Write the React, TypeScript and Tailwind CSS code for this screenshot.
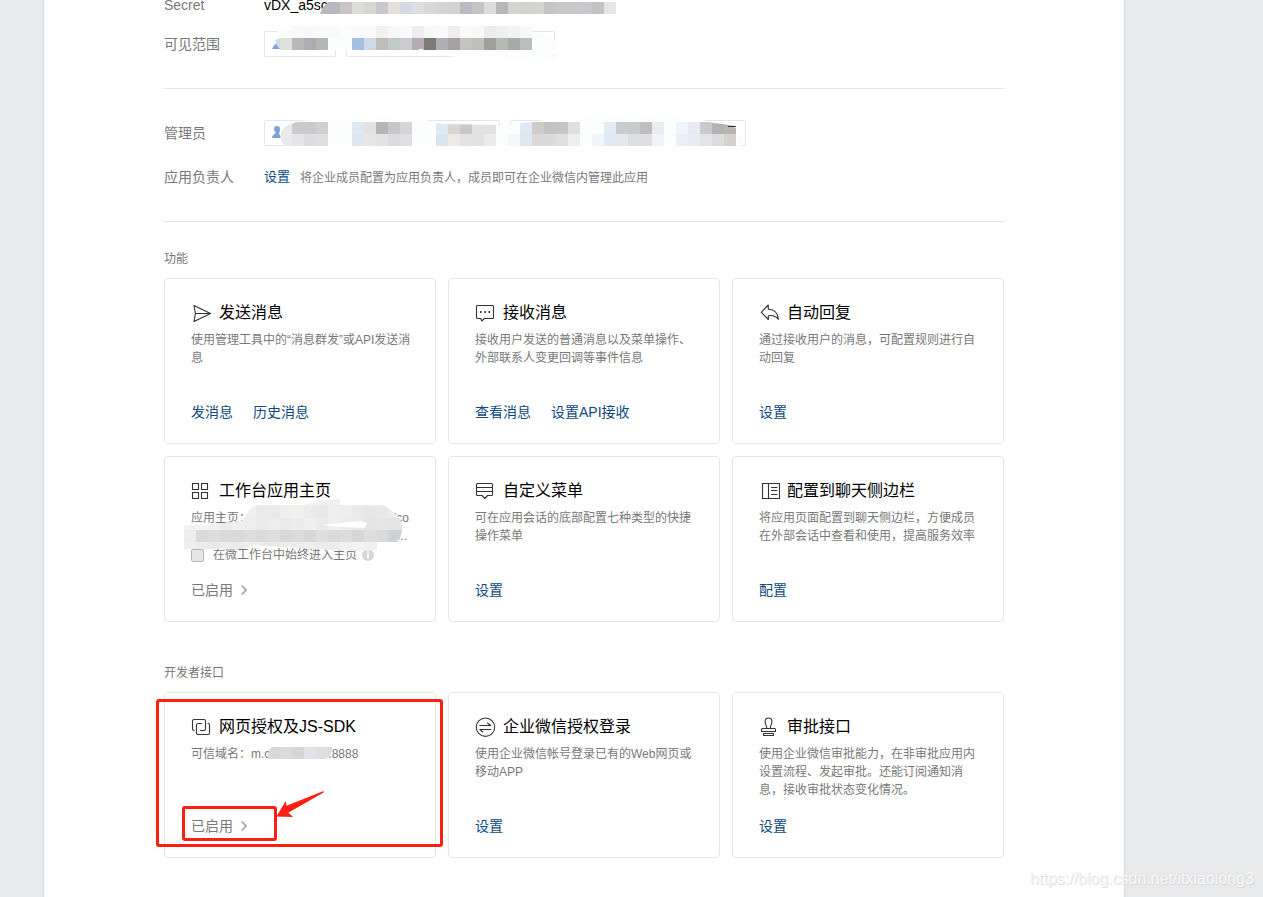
import React from "react";

type Cell = [number, number, string];

function row(x: number, y: number, colors: string[]): Cell[] {
  return colors.map((c, i) => [x + i * 12, y, c] as Cell);
}

function Cells({ cells }: { cells: Cell[] }) {
  return (
    <>
      {cells.map(([x, y, c]) => (
        <rect key={`${x}-${y}`} x={x} y={y} width="12" height="12" fill={c} shapeRendering="crispEdges" />
      ))}
    </>
  );
}

const secretCells = row(64, 0, [
  "#b9b9bd", "#cbc4c7", "#dcdddb", "#d8d6d1", "#c9c9cd", "#e2dfdd", "#d5dae2", "#dedfe1", "#d8d9d6", "#d3d6d4",
  "#d4d2d3", "#bdbcc2", "#c6c3c5", "#dcdddb", "#b7b7b9", "#d3d7d3", "#d2d2ce", "#d2d6cf", "#c2c5c3", "#c9c9c9",
  "#c9c9cb", "#cbc9cf", "#c3c3c3", "#e6e7e9",
]);

const scopeCells: Cell[] = [
  ...row(28, 0, ["#f9f9f8", "#f7f8fb", "#fafafa", "#f9fafa"]),
  ...row(88, 0, ["#f9fafc", "#fafafa", "#f1f1f0", "#f8f8f9", "#fafafa", "#eeedee", "#f8f8f9", "#fafafa", "#eeeeee", "#fafafa", "#f8f8f8", "#ececec", "#efefef", "#f2f2f3", "#f8f8f8"]),
  ...row(16, 12, ["#e0e1dd", "#b9b7bb", "#adacb2", "#b3b8b7"]),
  ...row(88, 12, ["#a5bfe0", "#d0d8e5", "#bebdb9", "#c2cac8", "#cccbd0", "#b5acb3", "#7c7b77", "#aeafb4", "#a5a1a3", "#c2c4c0", "#bfc0bb", "#9fa098", "#b5bab3", "#a9a9a9", "#b9bec0"]),
];

const adminCells: Cell[] = [
  ...row(16, 8, ["#eceae5", "#c9c9ce", "#cacacb", "#cfd1d0"]),
  ...row(16, 20, ["#e8eaed", "#e5e5e8", "#dcdde1", "#dfe0de"]),
  ...row(88, 8, ["#e0e8f3", "#e6e2e1", "#b2b6b7", "#c9c6c9", "#d6d6d8"]),
  ...row(88, 20, ["#dde7f2", "#e6e7e9", "#e3e3e6", "#dcdadd", "#e0e0e4"]),
  ...row(172, 8, ["#e0e8f2", "#d9d6cf", "#c6c8c9", "#e2e2e4", "#e2e2e4"]),
  ...row(172, 20, ["#dbe5f1", "#ece9e7", "#e1e4e2", "#e2e3e1", "#ebebee"]),
  ...row(256, 8, ["#dfe8f3", "#cfcbc9", "#c3c4c0", "#c5c6c4", "#dee1df"]),
  ...row(244, 20, ["#f6f7fa", "#dde8f3", "#dbd9d9", "#dadada", "#e0e0e0", "#efefee"]),
  ...row(340, 8, ["#e2ebf5", "#c9cdcf", "#c8cbcb", "#c1bcbe", "#eaebef"]),
  ...row(328, 20, ["#f1f4fa", "#e0eaf5", "#e7e8ed", "#dfdedf", "#dfdfe1", "#f2f3f6"]),
  ...row(412, 8, ["#eef4f9", "#e9e9f3", "#c9c9cf", "#b1b4b2", "#b8b5b4"]),
  ...row(412, 20, ["#e9eef8", "#e9ebf6", "#e3e4e3", "#d9dddd", "#d4d1cf"]),
];

const homeCells: Cell[] = [
  ...row(72, 7, ["#e9eaea", "#e9eaea", "#eeeeee", "#f0f0ef", "#ebebeb", "#e9e9e9", "#eeeeee", "#ededed", "#e9e9e9", "#e6e6e6", "#e8e8e8", "#ededed"]),
  ...row(0, 19, ["#f1f1f1", "#f3f3f3", "#f0f0f0", "#ececec", "#efefef", "#eeeeee", "#eaeaea", "#ededed", "#e9e9e9", "#ececec", "#efefef", "#ebebeb", "#eeeeee", "#ececec", "#e9e9e9", "#e5e5e5", "#e6e6e6", "#e5e5e5", "#e5e5e5"]),
  ...row(0, 31, ["#efedeb", "#d9dbda", "#dcdddc", "#d9d9d8", "#dad9da", "#dddedd", "#dadada", "#dedede", "#d8d8d8", "#dbdbdb", "#d7d7d7", "#dedede", "#dadada", "#dcdcdc", "#d7d7d7", "#dedede", "#d9dad9", "#cfd2d4", "#cfd2d4"]),
  ...row(0, 43, ["#f0efef", "#ebebeb", "#e9e9e9", "#ececec", "#ebebeb", "#eeeeee", "#ebebeb", "#e9e9e9", "#ededed", "#ebebeb", "#eeeeee", "#ececec", "#ededed", "#f1f1f1", "#f3f3f3", "#f0f0f0"]),
];

function SecretMosaic() {
  return (
    <svg aria-hidden="true" className="absolute left-0 top-[7px]" width="352" height="12" viewBox="0 0 352 12">
      <path d="M56 12 Q58 3 66 0 V12Z" fill="#b9b9bd" />
      <Cells cells={secretCells} />
    </svg>
  );
}

function ScopeMosaic() {
  return (
    <svg aria-hidden="true" className="absolute -top-[5px] left-0" width="292" height="34" viewBox="0 0 292 34">
      <path d="M8 23 Q10 18 14 17 L18 23Z" fill="#7ba4d3" />
      <path
        d="M12 12 Q12 0 24 0 H251 Q260 1 264 6 L276 8 Q292 10 292 20 Q292 34 281 34 L226 32 Q176 32 160 24 H18 Q13 20 12 12Z"
        fill="#fcfdfd"
      />
      <path d="M11 14 L16 12 V23 Q12 20 11 14Z" fill="#cfdcf0" />
      <Cells cells={scopeCells} />
      <path d="M154 24 Q157 22 160 24Z" fill="#ffffff" />
    </svg>
  );
}

function AdminMosaic() {
  return (
    <svg aria-hidden="true" className="absolute -top-[6px] left-0" width="484" height="32" viewBox="0 0 484 32">
      <path d="M13 12 a3 3 0 0 1 3 3 q0 3 -1 4 q0 2 3 5 h-10 q0 -3 4 -5 q-2 -2 -2 -4 a3 3 0 0 1 3 -3Z" fill="#7ba4d3" />
      <defs>
        <clipPath id="admin-smear">
          <path d="M17 26 Q14 13 30 9 Q34 6 50 6 L100 5 Q120 1 136 4 L152 6 L166 8 L180 10 L236 11 L246 11 L280 6 L336 2 Q380 -1 436 5 L448 9 L470 13 Q482 18 477 32 H22 Q18 30 17 26Z" />
        </clipPath>
      </defs>
      <g clipPath="url(#admin-smear)">
        <rect width="484" height="32" fill="#fcfdfd" />
        <Cells cells={adminCells} />
      </g>
      <path d="M444 8 L472 12 V13 L460 12Z" fill="#b1b4b2" />
      <path d="M464 12 H472 V13 H464Z" fill="#333333" />
    </svg>
  );
}

function HomeMosaic() {
  return (
    <svg aria-hidden="true" className="absolute left-[19px] top-[42px]" width="220" height="58" viewBox="0 0 220 58">
      <defs>
        <clipPath id="home-smear">
          <path d="M0 26 H22 L58 22 Q62 16 65 12 Q68 7 75 6 H120 L138 1 L156 0 V6 H199 Q210 12 216 20 L218 28 Q218 38 213 43 H193 V51 L168 52 L150 51 L70 46 L60 50 H0Z" />
        </clipPath>
      </defs>
      <g clipPath="url(#home-smear)">
        <rect width="220" height="58" fill="#efefee" />
        <Cells cells={homeCells} />
      </g>
      <path d="M138 26 L165 23 Q177 21 183 24 L181 29 L158 28Z" fill="#ffffff" />
    </svg>
  );
}

function DomainMosaic() {
  return (
    <svg aria-hidden="true" className="-ml-[2px] -mr-1 inline-block h-3 w-16 align-[-1px]" viewBox="0 0 64 12">
      <defs>
        <clipPath id="domain-smear">
          <path d="M0 12 Q0 2 4 0 H64 Q64 8 58 12Z" />
        </clipPath>
      </defs>
      <g clipPath="url(#domain-smear)">
        <Cells cells={row(0, 0, ["#d8d8d9", "#dbdbdc", "#d6d6d7", "#e2e3e8", "#dfdfe1", "#d9dbd9"])} />
      </g>
    </svg>
  );
}

function Icon({ children }: { children: React.ReactNode }) {
  return (
    <svg
      aria-hidden="true"
      className="h-5 w-5 shrink-0 overflow-visible"
      viewBox="0 1 20 20"
      fill="none"
      stroke="#333333"
      strokeWidth="1.1"
      strokeLinejoin="round"
      strokeLinecap="round"
    >
      {children}
    </svg>
  );
}

const icons = {
  send: (
    <Icon>
      <path d="M3 3.5 L19.5 11.5 L3 19.5 L4.4 11.5Z M4.4 11.5 H19" />
    </Icon>
  ),
  receive: (
    <Icon>
      <path d="M2.5 3.5 H17.5 Q18.5 3.5 18.5 4.5 V15.5 Q18.5 16.5 17.5 16.5 H9.5 L6.8 19 L5.8 16.5 H2.5 Q1.5 16.5 1.5 15.5 V4.5 Q1.5 3.5 2.5 3.5Z" />
      <path d="M5 10 H6.5 M9.3 10 H10.8 M13.5 10 H15" strokeWidth="1.8" strokeLinecap="butt" />
    </Icon>
  ),
  reply: (
    <Icon>
      <path d="M9.3 3 L2.3 10.3 L9.3 17.5 V13.7 C13.5 13.1 16.7 13.8 19.3 17.3 C19 11 15 7.4 9.3 7.2Z" />
    </Icon>
  ),
  grid: (
    <Icon>
      <path d="M1.5 3.5 h6 v6 h-6Z M10.5 3.5 h6 v6 h-6Z M1.5 12.5 h6 v6 h-6Z M10.5 12.5 h6 v6 h-6Z" strokeLinejoin="miter" />
    </Icon>
  ),
  menu: (
    <Icon>
      <path d="M2.5 3.5 H16.5 Q17.5 3.5 17.5 4.5 V14.5 Q17.5 15.5 16.5 15.5 H12.6 L9.8 18.5 L7 15.5 H2.5 Q1.5 15.5 1.5 14.5 V4.5 Q1.5 3.5 2.5 3.5Z M1.5 7.5 H17.5 M1.5 11.5 H17.5" />
    </Icon>
  ),
  sidebar: (
    <Icon>
      <path d="M3.5 3.5 H20.5 V18.5 H3.5Z M9.5 3.5 V18.5 M12.5 7.5 H18 M12.5 10.5 H18 M12.5 14.5 H18" strokeLinejoin="miter" />
    </Icon>
  ),
  link: (
    <Icon>
      <path d="M3.2 14.5 Q1.5 14.5 1.5 12.8 V5 Q1.5 3.5 3 3.5 H13 Q14.5 3.5 14.5 5 V12.8 Q14.5 14.5 12.8 14.5 H9.5" />
      <path d="M17 7.5 Q18.5 7.5 18.5 9.2 V17 Q18.5 18.5 17 18.5 H7 Q5.5 18.5 5.5 17 V9.2 Q5.5 7.5 7.2 7.5 H10.5" />
    </Icon>
  ),
  login: (
    <Icon>
      <circle cx="10.5" cy="11.2" r="9.2" />
      <path d="M4.8 9.5 H15.8 L12.4 7 M16 13.5 H4.8 L7.8 16" />
    </Icon>
  ),
  stamp: (
    <Icon>
      <path d="M7.5 12.5 L7.7 10.5 C5.4 7 5.2 2 9.5 2 C13.8 2 13.6 7 11.3 10.5 L11.5 12.5" />
      <path d="M3.5 12.5 H15.5 Q16.5 12.5 16.5 13.5 V15.5 H2.5 V13.5 Q2.5 12.5 3.5 12.5Z M4.5 17.5 H14.5 V19.5 H4.5Z" />
    </Icon>
  ),
};

function Card({
  icon,
  title,
  children,
  actions,
  overlay,
}: {
  icon: React.ReactNode;
  title: string;
  children: React.ReactNode;
  actions: React.ReactNode;
  overlay?: React.ReactNode;
}) {
  return (
    <article className="relative flex min-h-[166px] flex-col rounded border border-[#e4e6e9] pt-[22px] pr-6 pb-[21px] pl-[26px]">
      <h3 className="flex items-center gap-2 text-base leading-6 text-black">
        {icon}
        {title}
      </h3>
      <div className="mt-[6px] text-xs leading-[18px] text-[#787878]">{children}</div>
      <div className="mt-auto flex gap-5 text-sm leading-5">{actions}</div>
      {overlay}
    </article>
  );
}

function Action({ children }: { children: React.ReactNode }) {
  return (
    <a href="#" className="text-[#0e4a80] hover:underline">
      {children}
    </a>
  );
}

function Enabled() {
  return (
    <a href="#" className="flex items-center gap-2 text-[#787878]">
      已启用
      <svg aria-hidden="true" className="h-3 w-[6px]" viewBox="0 0 6 12" fill="none" stroke="#a6a6a6" strokeWidth="1.8">
        <path d="M0.8 1.5 L5 6 L0.8 10.5" />
      </svg>
    </a>
  );
}

function Field({ label, children }: { label: string; children: React.ReactNode }) {
  return (
    <div className="flex items-center text-sm leading-5">
      <dt className="w-[100px] shrink-0 text-[#787878]">{label}</dt>
      <dd className="relative flex min-w-0 items-center gap-[10px]">{children}</dd>
    </div>
  );
}

function Tag({ wide = false }: { wide?: boolean }) {
  return <span className={`h-[26px] rounded-xs border border-[#e4e6e9] ${wide ? "w-[209px]" : "w-[72px]"}`} />;
}

function Annotation() {
  return (
    <svg
      aria-hidden="true"
      className="pointer-events-none absolute -left-[10px] top-[5px]"
      width="290"
      height="152"
      viewBox="0 0 290 152"
      fill="none"
      stroke="#ff1f12"
      strokeWidth="3"
    >
      <rect x="2.5" y="2.5" width="284" height="145" rx="1.5" />
      <rect x="28.5" y="109.5" width="92" height="32" rx="1.5" />
      <path
        d="M121.5 118.5 L130.7 103 L131.5 107.8 L168 93.2 Q169.6 93.4 168.6 94.6 L133.3 114.7 L138.2 118.9Z"
        fill="#ff1f12"
        stroke="none"
      />
    </svg>
  );
}

export default function App() {
  return (
    <div className="relative flex min-h-screen overflow-hidden bg-[#e8e9eb] font-['Liberation_Sans','Noto_Sans_CJK_SC',sans-serif]">
      <main className="mr-[138px] ml-[43px] flex-1 border-x border-[#d9dbdd] bg-white px-[120px] pb-[39px]">
        <dl className="-mt-[5px] border-b border-[#e4e6e9] pb-[31px]">
          <Field label="Secret">
            <span className="text-black">vDX_a5sc</span>
            <SecretMosaic />
          </Field>
          <div className="h-4" />
          <Field label="可见范围">
            <Tag />
            <Tag wide />
            <ScopeMosaic />
          </Field>
        </dl>

        <dl className="border-b border-[#e4e6e9] pt-[31px] pb-[34px]">
          <Field label="管理员">
            <Tag />
            <Tag />
            <Tag />
            <Tag />
            <Tag />
            <Tag />
            <AdminMosaic />
          </Field>
          <div className="h-[21px]" />
          <Field label="应用负责人">
            <a href="#" className="text-[13px] text-[#0e4a80] hover:underline">设置</a>
            <span className="text-xs leading-[18px] pt-[2px] text-[#787878]">将企业成员配置为应用负责人，成员即可在企业微信内管理此应用</span>
          </Field>
        </dl>

        <section>
          <h2 className="mt-[28px] mb-[10px] text-xs leading-[18px] text-[#787878]">功能</h2>
          <div className="grid grid-cols-3 gap-3">
            <Card icon={icons.send} title="发送消息" actions={<><Action>发消息</Action><Action>历史消息</Action></>}>
              使用管理工具中的“消息群发”或API发送消息
            </Card>
            <Card icon={icons.receive} title="接收消息" actions={<><Action>查看消息</Action><Action>设置API接收</Action></>}>
              接收用户发送的普通消息以及菜单操作、外部联系人变更回调等事件信息
            </Card>
            <Card icon={icons.reply} title="自动回复" actions={<Action>设置</Action>}>
              通过接收用户的消息，可配置规则进行自动回复
            </Card>
            <Card icon={icons.grid} title="工作台应用主页" actions={<Enabled />} overlay={<HomeMosaic />}>
              <p className="flex justify-between pr-[2px]">
                <span>应用主页：</span>
                <span>/co</span>
              </p>
              <p className="pr-1 text-right">...</p>
              <div className="mt-px flex items-center">
                <input
                  id="always-home"
                  type="checkbox"
                  className="mr-[9px] h-[13px] w-[13px] appearance-none rounded-xs border border-[#b5b5b5] bg-[#e6e6e6]"
                />
                <label htmlFor="always-home">在微工作台中始终进入主页</label>
                <svg aria-hidden="true" className="ml-[5px] h-3 w-3" viewBox="0 0 12 12">
                  <circle cx="6" cy="6" r="6" fill="#d3d5d7" />
                  <path d="M6 2.2 V3.8 M6 5 V9.6" stroke="#ffffff" strokeWidth="1.6" />
                </svg>
              </div>
            </Card>
            <Card icon={icons.menu} title="自定义菜单" actions={<Action>设置</Action>}>
              可在应用会话的底部配置七种类型的快捷操作菜单
            </Card>
            <Card icon={icons.sidebar} title="配置到聊天侧边栏" actions={<Action>配置</Action>}>
              将应用页面配置到聊天侧边栏，方便成员在外部会话中查看和使用，提高服务效率
            </Card>
          </div>
        </section>

        <section>
          <h2 className="mt-[42px] mb-[10px] text-xs leading-[18px] text-[#787878]">开发者接口</h2>
          <div className="grid grid-cols-3 gap-3">
            <Card icon={icons.link} title="网页授权及JS-SDK" actions={<Enabled />} overlay={<Annotation />}>
              可信域名：m.c
              <DomainMosaic />
              .8888
            </Card>
            <Card icon={icons.login} title="企业微信授权登录" actions={<Action>设置</Action>}>
              使用企业微信帐号登录已有的Web网页或移动APP
            </Card>
            <Card icon={icons.stamp} title="审批接口" actions={<Action>设置</Action>}>
              使用企业微信审批能力，在非审批应用内设置流程、发起审批。还能订阅通知消息，接收审批状态变化情况。
            </Card>
          </div>
        </section>
      </main>
      <p className="absolute right-[9px] bottom-[6px] text-base leading-6 text-[#f6f6f6] [text-shadow:1px_1px_1px_#d8d8d8]">
        https://blog.csdn.net/itxiaolong3
      </p>
    </div>
  );
}
